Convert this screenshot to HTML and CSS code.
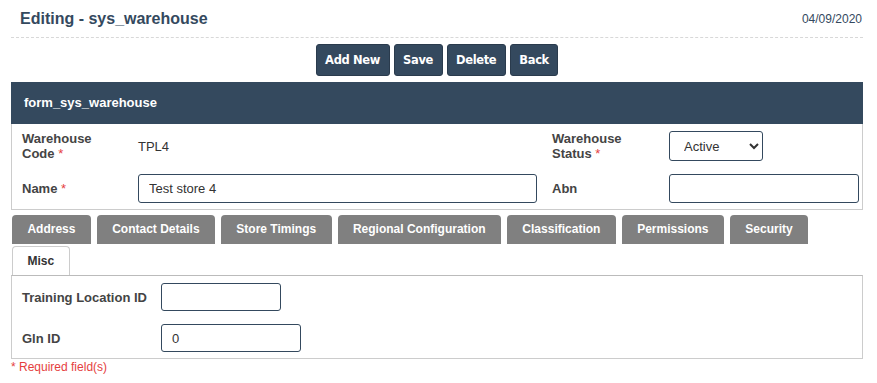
FILE: index.html
```html
<!DOCTYPE html>
<html>
<head>
<meta charset="utf-8">
<link rel="stylesheet" href="styles.css">
</head>
<body>
<div class="page">
  <div class="topbar">
    <h1 class="title">Editing - sys_warehouse</h1>
    <span class="date">04/09/2020</span>
  </div>
  <div class="actions">
    <button class="btn">Add New</button>
    <button class="btn">Save</button>
    <button class="btn">Delete</button>
    <button class="btn">Back</button>
  </div>
  <div class="panel-head">form_sys_warehouse</div>
  <div class="panel-body">
    <div class="label">Warehouse<br>Code <span class="req">*</span></div>
    <div class="value">TPL4</div>
    <div class="label">Warehouse<br>Status <span class="req">*</span></div>
    <div class="control"><select class="select"><option>Active</option><option>Inactive</option></select></div>
    <div class="label label-single">Name <span class="req">*</span></div>
    <div class="control"><input class="input input-name" type="text" value="Test store 4"></div>
    <div class="label label-single">Abn</div>
    <div class="control"><input class="input input-abn" type="text" value=""></div>
  </div>
  <div class="tabs">
    <div class="tab">Address</div>
    <div class="tab">Contact Details</div>
    <div class="tab">Store Timings</div>
    <div class="tab">Regional Configuration</div>
    <div class="tab">Classification</div>
    <div class="tab">Permissions</div>
    <div class="tab">Security</div>
    <div class="tab-break"></div>
    <div class="tab tab-active">Misc</div>
  </div>
  <div class="tab-body">
    <div class="field-label">Training Location ID</div>
    <div><input class="input input-train" type="text" value=""></div>
    <div class="field-label">Gln ID</div>
    <div><input class="input input-gln" type="text" value="0"></div>
  </div>
  <div class="required-note">* Required field(s)</div>
</div>
</body>
</html>
```

FILE: styles.css
```css
html, body {
  margin: 0;
  padding: 0;
  background: #ffffff;
}
body {
  font-family: "Liberation Sans", Arial, sans-serif;
  color: #333333;
  font-size: 13px;
}
.page {
  width: 852px;
  padding-left: 11px;
}
.topbar {
  height: 38px;
  box-sizing: border-box;
  border-bottom: 1px dashed #d8d8d8;
  display: flex;
  align-items: center;
  justify-content: space-between;
  padding: 0 1px 0 9px;
}
.title {
  margin: 0;
  font-size: 16px;
  font-weight: bold;
  color: #34495e;
  line-height: 20px;
}
.date {
  font-size: 12px;
  color: #34495e;
}
.actions {
  display: flex;
  justify-content: center;
  gap: 4px;
  margin-top: 6px;
}
.btn {
  height: 32px;
  padding: 0 8.5px;
  background: #34495e;
  color: #ffffff;
  border: 1px solid #2a3b4d;
  border-radius: 3px;
  font-family: "DejaVu Sans", Verdana, sans-serif;
  font-weight: bold;
  font-size: 11.5px;
  letter-spacing: -0.35px;
}
.panel-head {
  margin-top: 6px;
  height: 42px;
  box-sizing: border-box;
  background: #34495e;
  color: #ffffff;
  font-weight: bold;
  font-size: 13px;
  display: flex;
  align-items: center;
  padding-left: 13px;
  padding-bottom: 1px;
}
.panel-body {
  border: 1px solid #cccccc;
  border-top: none;
  display: grid;
  grid-template-columns: 116px 414px 117px 190px;
  row-gap: 13px;
  padding: 7px 3px 6px 10px;
  align-items: center;
}
.label {
  font-weight: bold;
  color: #444444;
  font-size: 13px;
  line-height: 15px;
}
.req {
  color: #e53e3e;
  font-weight: normal;
}
.value {
  font-size: 13px;
  color: #333333;
}
.control {
  display: flex;
}
.select {
  width: 94px;
  height: 30px;
  border: 1px solid #34495e;
  border-radius: 3px;
  background: #ffffff;
  color: #333333;
  font-family: "Liberation Sans", Arial, sans-serif;
  font-size: 13px;
  padding: 0 4px 0 10px;
}
.input {
  box-sizing: border-box;
  height: 29px;
  border: 1px solid #34495e;
  border-radius: 3px;
  background: #ffffff;
  color: #333333;
  font-family: "Liberation Sans", Arial, sans-serif;
  font-size: 13px;
  padding: 0 10px;
  margin: 0;
}
.input-name { width: 399px; }
.input-abn { width: 190px; }
.tabs {
  display: flex;
  flex-wrap: wrap;
  column-gap: 6px;
  row-gap: 0;
  margin-top: 5px;
  padding-left: 1px;
}
.tab {
  height: 29px;
  box-sizing: border-box;
  background: #808080;
  color: #ffffff;
  font-weight: bold;
  font-size: 12px;
  display: flex;
  align-items: center;
  padding: 0 15.4px 1px;
  border-radius: 4px 4px 0 0;
}
.tab-break {
  flex-basis: 100%;
  height: 0;
}
.tab-active {
  margin-top: 2px;
  background: #ffffff;
  color: #333333;
  border: 1px solid #cccccc;
  border-bottom: none;
  padding: 0 14.5px 1px;
}
.tab-body {
  border: 1px solid #cccccc;
  border-top-color: #bbbbbb;
  display: grid;
  grid-template-columns: 139px auto;
  justify-content: start;
  row-gap: 13px;
  padding: 7px 10px 6px 10px;
  align-items: center;
}
.field-label {
  font-weight: bold;
  color: #444444;
  font-size: 13px;
}
.input-train { width: 120px; height: 28px; }
.input-gln { width: 140px; height: 28px; }
.required-note {
  color: #e53e3e;
  font-size: 12px;
  margin-top: 1px;
}
```
